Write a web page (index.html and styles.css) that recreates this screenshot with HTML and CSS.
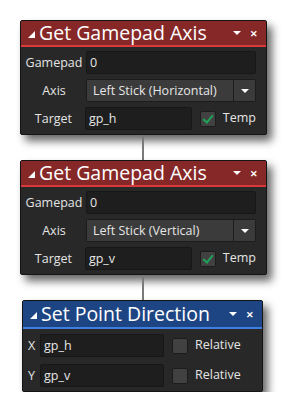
FILE: index.html
```html
<!DOCTYPE html>
<html lang="en">
<head>
    <meta charset="UTF-8">
    <title>Action Blocks</title>
    <link rel="stylesheet" href="styles.css">
</head>
<body>
    <div id="canvas">
        <div class="panel">
            <div class="panel-head red">
                <span class="fold"></span>
                <span class="title">Get Gamepad Axis</span>
                <span class="menu"></span>
                <span class="close">&#x2715;</span>
            </div>
            <div class="panel-body">
                <div class="row">
                    <label class="lbl">Gamepad</label>
                    <div class="field wide">0</div>
                </div>
                <div class="row">
                    <label class="lbl">Axis</label>
                    <div class="select">
                        <div class="select-value">Left Stick (Horizontal)</div>
                        <div class="select-btn"><span class="menu"></span></div>
                    </div>
                </div>
                <div class="row">
                    <label class="lbl">Target</label>
                    <div class="field short">gp_h</div>
                    <span class="check on"></span>
                    <span class="check-text">Temp</span>
                </div>
            </div>
        </div>

        <div class="wire"></div>

        <div class="panel">
            <div class="panel-head red">
                <span class="fold"></span>
                <span class="title">Get Gamepad Axis</span>
                <span class="menu"></span>
                <span class="close">&#x2715;</span>
            </div>
            <div class="panel-body">
                <div class="row">
                    <label class="lbl">Gamepad</label>
                    <div class="field wide">0</div>
                </div>
                <div class="row">
                    <label class="lbl">Axis</label>
                    <div class="select">
                        <div class="select-value">Left Stick (Vertical)</div>
                        <div class="select-btn"><span class="menu"></span></div>
                    </div>
                </div>
                <div class="row">
                    <label class="lbl">Target</label>
                    <div class="field short">gp_v</div>
                    <span class="check on"></span>
                    <span class="check-text">Temp</span>
                </div>
            </div>
        </div>

        <div class="wire"></div>

        <div class="panel small">
            <div class="panel-head blue">
                <span class="fold"></span>
                <span class="title">Set Point Direction</span>
                <span class="menu"></span>
                <span class="close">&#x2715;</span>
            </div>
            <div class="panel-body">
                <div class="row">
                    <label class="lbl tiny">X</label>
                    <div class="field mid">gp_h</div>
                    <span class="check"></span>
                    <span class="check-text">Relative</span>
                </div>
                <div class="row">
                    <label class="lbl tiny">Y</label>
                    <div class="field mid">gp_v</div>
                    <span class="check"></span>
                    <span class="check-text">Relative</span>
                </div>
            </div>
        </div>
    </div>
</body>
</html>
```

FILE: styles.css
```css
body {
    margin: 0;
    padding: 0;
    background-color: #fff;
    font-family: "Open Sans", "Noto Sans", sans-serif;
    color: #e6e6e6;
}

#canvas {
    display: flex;
    flex-direction: column;
    align-items: flex-start;
    padding: 20px 0 0 20px;
}

.panel {
    width: 245px;
    background-color: #282828;
    border: 1px solid #141414;
    border-radius: 2px;
    box-shadow: 5px 6px 8px rgba(0, 0, 0, 0.6);
}

.panel.small {
    width: 239px;
    margin-left: 2px;
}

.wire {
    width: 2px;
    height: 25px;
    margin-left: 122px;
    background-color: #7a7a7a;
}

.panel-head {
    display: flex;
    align-items: center;
    height: 24px;
    padding: 0 8px 0 7px;
    border-bottom: 2px solid #d8393b;
    margin-bottom: 1px;
}

.panel-head.red {
    background-color: #862828;
}

.panel-head.blue {
    background-color: #1e4583;
    border-bottom-color: #3d7fe0;
    height: 26px;
}

.fold {
    width: 0;
    height: 0;
    border-left: 7px solid transparent;
    border-bottom: 7px solid #fff;
    margin-right: 4px;
    margin-top: 3px;
}

.title {
    flex: 1;
    font-size: 19.5px;
    color: #fff;
    line-height: 24px;
    white-space: nowrap;
}

.panel-head .menu {
    margin-right: 9px;
}

.menu {
    width: 0;
    height: 0;
    border-left: 4px solid transparent;
    border-right: 4px solid transparent;
    border-top: 4px solid #fff;
}

.close {
    font-size: 9px;
    font-weight: bold;
    color: #fff;
}

.panel-body {
    display: flex;
    flex-direction: column;
    gap: 5px;
    padding: 3px 10px 4px 0;
}

.small .panel-body {
    gap: 7px;
    padding: 4px 10px 4px 0;
}

.row {
    display: flex;
    align-items: center;
    height: 23px;
}

.lbl {
    width: 64px;
    padding-left: 1px;
    text-align: center;
    font-size: 12.5px;
    color: #e4e4e4;
}

.lbl.tiny {
    width: 17px;
    padding-left: 0;
}

.field {
    box-sizing: border-box;
    height: 23px;
    line-height: 21px;
    padding: 0 3px;
    background-color: #1e1e1e;
    border: 1px solid #171717;
    border-radius: 2px;
    font-size: 12.5px;
    color: #e6e6e6;
}

.field.wide {
    flex: 1;
}

.field.short {
    width: 109px;
}

.field.mid {
    width: 124px;
}

.select {
    flex: 1;
    display: flex;
    height: 23px;
    border: 1px solid #1c1c1c;
    border-radius: 2px;
    box-sizing: border-box;
}

.select-value {
    flex: 1;
    line-height: 21px;
    padding-left: 6px;
    background-color: #3b3b3b;
    font-size: 12.5px;
    border-right: 1px solid #1c1c1c;
}

.select-btn {
    width: 21px;
    display: flex;
    align-items: center;
    justify-content: center;
    background-color: #3b3b3b;
}

.check {
    box-sizing: border-box;
    width: 16px;
    height: 16px;
    margin-left: 8px;
    background-color: #414141;
    border: 1px solid #1c1c1c;
    border-radius: 2px;
    position: relative;
}

.check.on::after {
    content: "";
    position: absolute;
    left: 4px;
    top: 1px;
    width: 4px;
    height: 8px;
    border-right: 2px solid #1fa35a;
    border-bottom: 2px solid #1fa35a;
    transform: rotate(40deg);
}

.check-text {
    margin-left: 7px;
    font-size: 12.5px;
    color: #e4e4e4;
    margin-top: -3px;
}
```
